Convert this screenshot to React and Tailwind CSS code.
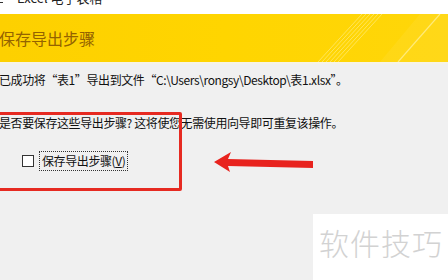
import React from "react";

const cjk = { fontFamily: '"Noto Sans CJK SC", "Noto Sans", sans-serif' };

export default function App() {
  return (
    <div className="relative w-[448px] h-[280px] overflow-hidden bg-[#f0f0f0]" style={cjk}>
      {/* window caption strip */}
      <div className="h-[14px] bg-white overflow-hidden flex items-start">
        <span className="mt-[2px] ml-0 w-[3px] h-[1px] bg-[#333]" />
        <span className="ml-[14px] -mt-[10px] text-[13px] leading-[16px] text-[#222]">Excel 电子表格</span>
      </div>
      {/* yellow banner */}
      <div className="relative h-[48px] bg-gradient-to-r from-[#fdd000] via-[#ffd500] to-[#ffd60a] flex items-center">
        <svg className="absolute inset-0" width="448" height="48" viewBox="0 0 448 48">
          <g stroke="#fff3a0" strokeOpacity="0.55" strokeWidth="1">
            <line x1="318" y1="48" x2="362" y2="0" />
            <line x1="322" y1="48" x2="366" y2="0" />
            <line x1="326" y1="48" x2="370" y2="0" />
            <line x1="330" y1="48" x2="374" y2="0" />
            <line x1="334" y1="48" x2="378" y2="0" />
            <line x1="338" y1="48" x2="382" y2="0" />
          </g>
          <line x1="398" y1="48" x2="440" y2="0" stroke="#fff2a0" strokeOpacity="0.7" strokeWidth="1.2" />
          <polygon points="380,48 420,0 448,0 448,48" fill="#ffffff" fillOpacity="0.06" />
        </svg>
        <span className="relative text-[16px] leading-[20px] text-[#946300] -ml-[1px]">保存导出步骤</span>
      </div>
      <div className="h-[2px] bg-[#f6f3e6]" />
      {/* body */}
      <div className="text-[12px] leading-[16px] text-[#111] tracking-[-0.4px]">
        <div className="mt-[8px] -ml-[1px] whitespace-nowrap">已成功将“表1”导出到文件“C:\Users\rongsy\Desktop\表1.xlsx”。</div>
        <div className="mt-[27px] -ml-[1px] whitespace-nowrap">是否要保存这些导出步骤? 这将使您无需使用向导即可重复该操作。</div>
        <div className="mt-[20px] flex items-center h-[20px] ml-[22px]">
          <span className="w-[12px] h-[12px] border border-[#333] bg-white" />
          <span className="ml-[5px] px-[2px] h-[20px] flex items-center border border-dotted border-[#333]">
            保存导出步骤(<span className="underline">V</span>)
          </span>
        </div>
      </div>
      {/* red highlight box */}
      <div className="absolute left-[-10px] top-[112px] w-[192px] h-[79px] border-[3px] border-[#e62a21] rounded-[2px]" />
      {/* arrow */}
      <svg className="absolute left-0 top-0" width="448" height="280" viewBox="0 0 448 280">
        <polygon points="214,162 231,152 228,159 313,161 313,168 228,166 230,172" fill="#e8231e" />
      </svg>
      {/* watermark */}
      <div className="absolute left-[313px] top-[214px] right-0 bottom-0 bg-white flex items-start">
        <span className="mt-[10px] ml-[6px] text-[30px] leading-[36px] font-light text-[#d2d2d2] tracking-[1px]">软件技巧</span>
      </div>
    </div>
  );
}
